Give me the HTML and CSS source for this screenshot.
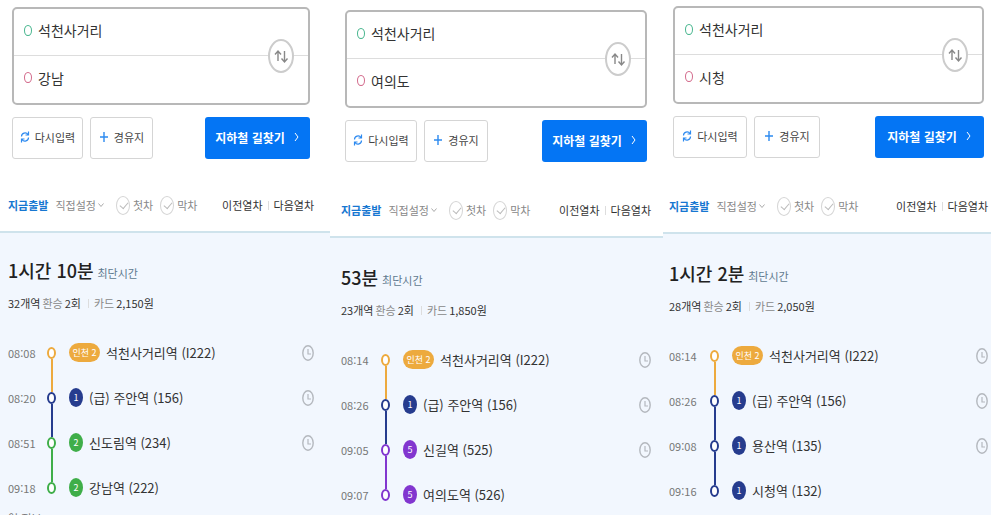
FILE: index.html
```
<!DOCTYPE html>
<html lang="ko">
<head>
    <meta charset="UTF-8">
    <meta name="viewport" content="width=device-width, initial-scale=1.0">
    <title>지하철 길찾기</title>
    <link rel="stylesheet" href="styles.css">
</head>
<body>
    <!-- shared icons -->
    <svg class="icons" aria-hidden="true">
        <symbol id="swap" viewBox="0 0 16 16"><path stroke-width="1.4" d="M5 13V3M2 6.500L5 3l3 3.500M11.500 3v11M8.500 10.500l3 3.500 3-3.500"/></symbol>
        <symbol id="reset" viewBox="0 0 10 14"><path stroke-width="1.2" d="M1.500 6.500C1.500 3 6 1.500 8 4.500M8.500 1.500v3.500H5.500M8.500 7.500C8.500 11 4 12.500 2 9.500M1.500 12.500V9H4.500"/></symbol>
        <symbol id="plus" viewBox="0 0 10 14"><path stroke-width="1.4" d="M5 2v10M1 7h8"/></symbol>
        <symbol id="next" viewBox="0 0 6 10"><path d="M1 1l3 4-3 4"/></symbol>
        <symbol id="down" viewBox="0 0 6 6"><path d="M0.500 1.500l2.500 3 2.500-3"/></symbol>
        <symbol id="clock" viewBox="0 0 12 16"><ellipse cx="6" cy="8" rx="5.200" ry="7.200" stroke-width="1.4"/><path stroke-width="1.2" d="M6 4v5h3"/></symbol>
    </svg>

    <main class="container">
        <section class="panel first">
            <form class="search">
                <div class="places">
                    <div class="place start"><label for="start1"></label><input type="text" id="start1" aria-label="출발" value="석천사거리"></div>
                    <div class="place end"><label for="end1"></label><input type="text" id="end1" aria-label="도착" value="강남"></div>
                    <button type="button" class="swap" aria-label="출발 도착 바꾸기"><svg><use href="#swap"/></svg></button>
                </div>
                <div class="buttons">
                    <button type="reset" class="small"><svg><use href="#reset"/></svg>다시입력</button>
                    <button type="button" class="small via"><svg><use href="#plus"/></svg>경유지</button>
                    <button type="button" class="find">지하철 길찾기<svg><use href="#next"/></svg></button>
                </div>
            </form>
            <div class="options">
                <a href="#" class="now">지금출발</a>
                <a href="#" class="custom">직접설정<svg><use href="#down"/></svg></a>
                <label class="check"><input type="checkbox">첫차</label>
                <label class="check"><input type="checkbox">막차</label>
                <div class="trains"><a href="#">이전열차</a><a href="#">다음열차</a></div>
            </div>
            <div class="result">
                <h2>1시간 10분<small>최단시간</small></h2>
                <p class="info"><b>32개역</b><span>환승</span><b>2회</b><span class="card">카드</span><b>2,150원</b></p>
                <ol class="route">
                    <li class="incheon"><time>08:08</time><i class="dot"></i><span class="line">인천 2</span><span class="name">석천사거리역 (I222)</span><svg class="clock"><use href="#clock"/></svg></li>
                    <li class="line1"><time>08:20</time><i class="dot"></i><span class="line">1</span><span class="name">(급) 주안역 (156)</span><svg class="clock"><use href="#clock"/></svg></li>
                    <li class="line2"><time>08:51</time><i class="dot"></i><span class="line">2</span><span class="name">신도림역 (234)</span><svg class="clock"><use href="#clock"/></svg></li>
                    <li class="line2"><time>09:18</time><i class="dot"></i><span class="line">2</span><span class="name">강남역 (222)</span></li>
                </ol>
                <p class="more">역 정보</p>
            </div>
        </section>

        <section class="panel second">
            <form class="search">
                <div class="places">
                    <div class="place start"><label for="start2"></label><input type="text" id="start2" aria-label="출발" value="석천사거리"></div>
                    <div class="place end"><label for="end2"></label><input type="text" id="end2" aria-label="도착" value="여의도"></div>
                    <button type="button" class="swap" aria-label="출발 도착 바꾸기"><svg><use href="#swap"/></svg></button>
                </div>
                <div class="buttons">
                    <button type="reset" class="small"><svg><use href="#reset"/></svg>다시입력</button>
                    <button type="button" class="small via"><svg><use href="#plus"/></svg>경유지</button>
                    <button type="button" class="find">지하철 길찾기<svg><use href="#next"/></svg></button>
                </div>
            </form>
            <div class="options">
                <a href="#" class="now">지금출발</a>
                <a href="#" class="custom">직접설정<svg><use href="#down"/></svg></a>
                <label class="check"><input type="checkbox">첫차</label>
                <label class="check"><input type="checkbox">막차</label>
                <div class="trains"><a href="#">이전열차</a><a href="#">다음열차</a></div>
            </div>
            <div class="result">
                <h2>53분<small>최단시간</small></h2>
                <p class="info"><b>23개역</b><span>환승</span><b>2회</b><span class="card">카드</span><b>1,850원</b></p>
                <ol class="route">
                    <li class="incheon"><time>08:14</time><i class="dot"></i><span class="line">인천 2</span><span class="name">석천사거리역 (I222)</span><svg class="clock"><use href="#clock"/></svg></li>
                    <li class="line1"><time>08:26</time><i class="dot"></i><span class="line">1</span><span class="name">(급) 주안역 (156)</span><svg class="clock"><use href="#clock"/></svg></li>
                    <li class="line5"><time>09:05</time><i class="dot"></i><span class="line">5</span><span class="name">신길역 (525)</span><svg class="clock"><use href="#clock"/></svg></li>
                    <li class="line5"><time>09:07</time><i class="dot"></i><span class="line">5</span><span class="name">여의도역 (526)</span></li>
                </ol>
            </div>
        </section>

        <section class="panel third">
            <form class="search">
                <div class="places">
                    <div class="place start"><label for="start3"></label><input type="text" id="start3" aria-label="출발" value="석천사거리"></div>
                    <div class="place end"><label for="end3"></label><input type="text" id="end3" aria-label="도착" value="시청"></div>
                    <button type="button" class="swap" aria-label="출발 도착 바꾸기"><svg><use href="#swap"/></svg></button>
                </div>
                <div class="buttons">
                    <button type="reset" class="small"><svg><use href="#reset"/></svg>다시입력</button>
                    <button type="button" class="small via"><svg><use href="#plus"/></svg>경유지</button>
                    <button type="button" class="find">지하철 길찾기<svg><use href="#next"/></svg></button>
                </div>
            </form>
            <div class="options">
                <a href="#" class="now">지금출발</a>
                <a href="#" class="custom">직접설정<svg><use href="#down"/></svg></a>
                <label class="check"><input type="checkbox">첫차</label>
                <label class="check"><input type="checkbox">막차</label>
                <div class="trains"><a href="#">이전열차</a><a href="#">다음열차</a></div>
            </div>
            <div class="result">
                <h2>1시간 2분<small>최단시간</small></h2>
                <p class="info"><b>28개역</b><span>환승</span><b>2회</b><span class="card">카드</span><b>2,050원</b></p>
                <ol class="route">
                    <li class="incheon"><time>08:14</time><i class="dot"></i><span class="line">인천 2</span><span class="name">석천사거리역 (I222)</span><svg class="clock"><use href="#clock"/></svg></li>
                    <li class="line1"><time>08:26</time><i class="dot"></i><span class="line">1</span><span class="name">(급) 주안역 (156)</span><svg class="clock"><use href="#clock"/></svg></li>
                    <li class="line1"><time>09:08</time><i class="dot"></i><span class="line">1</span><span class="name">용산역 (135)</span><svg class="clock"><use href="#clock"/></svg></li>
                    <li class="line1"><time>09:16</time><i class="dot"></i><span class="line">1</span><span class="name">시청역 (132)</span></li>
                </ol>
            </div>
        </section>
    </main>
</body>
</html>
```
FILE: styles.css
```
* {
    box-sizing: border-box;
}

body {
    margin: 0;
    height: 100vh;
    overflow: hidden;
    background-color: #fff;
    font-family: "Noto Sans CJK KR", sans-serif;
    font-size: 12px;
    color: #444;
}

a {
    color: inherit;
    text-decoration: none;
}

button,
input {
    font-family: inherit;
}

svg {
    fill: none;
    stroke: currentColor;
    flex: none;
}

.icons {
    display: none;
}

.container {
    display: grid;
    grid-template-columns: 330fr 333fr 328fr;
    height: 100vh;
}

.panel {
    display: flex;
    flex-direction: column;
    min-width: 0;
}

.first {
    --side: 8px;
    --end: 16px;
    --time: 39px;
    --small: 71px;
    --find: 105px;
    --options-top: 20px;
    --result-top: 22px;
    padding-top: 7px;
}

.second {
    --side: 11px;
    --end: 12px;
    --time: 40px;
    --small: 72px;
    --find: 105px;
    --options-top: 22px;
    --result-top: 24px;
    padding-top: 10px;
}

.third {
    --side: 6px;
    --end: 3px;
    --time: 41px;
    --small: 74px;
    --find: 109px;
    --options-top: 22px;
    --result-top: 24px;
    padding-top: 6px;
}

/* search form */
.search {
    margin-left: calc(var(--side) + 4px);
    margin-right: calc(var(--end) + 4px);
}

.places {
    position: relative;
    border: 2px solid #b8b8b8;
    border-radius: 5px;
}

.place {
    display: flex;
    align-items: center;
    gap: 6px;
    height: 47px;
    padding-left: 10px;
    padding-bottom: 4px;
}

.start {
    border-bottom: 1px solid #ddd;
}

.place label {
    width: 8px;
    height: 11px;
    border: 1px solid #46b58d;
    border-radius: 50%;
}

.end label {
    border-color: #d2688a;
}

.place input {
    flex: 1;
    min-width: 0;
    padding: 0;
    border: none;
    outline: none;
    background: none;
    font-size: 14px;
    color: #333;
}

.swap {
    position: absolute;
    right: 14px;
    top: 50%;
    width: 26px;
    height: 34px;
    margin-top: -17px;
    padding: 0;
    border: 2px solid #ccc;
    border-radius: 50%;
    background-color: #fff;
    color: #888;
}

.swap svg {
    display: block;
    width: 16px;
    height: 16px;
    margin: auto;
}

.buttons {
    display: flex;
    gap: 7px;
    margin-top: 12px;
}

.buttons button {
    display: flex;
    align-items: center;
    justify-content: center;
    height: 42px;
    padding: 0 0 2px;
    border-radius: 3px;
    white-space: nowrap;
}

.buttons .small {
    width: var(--small);
    gap: 5px;
    border: 1px solid #d5d5d5;
    background-color: #fff;
    font-size: 11px;
    color: #444;
}

.buttons .via {
    width: calc(var(--small) - 8px);
}

.small svg {
    width: 10px;
    height: 14px;
    color: #2d8af0;
}

.buttons .find {
    width: var(--find);
    margin-left: auto;
    gap: 9px;
    border: none;
    background-color: #0475f4;
    font-size: 12px;
    font-weight: bold;
    color: #fff;
}

.find svg {
    width: 6px;
    height: 10px;
}

/* departure options */
.options {
    display: flex;
    align-items: center;
    height: 52px;
    margin-top: var(--options-top);
    padding-left: var(--side);
    padding-right: var(--end);
    font-size: 11px;
    white-space: nowrap;
    color: #888;
}

.now {
    font-weight: bold;
    color: #1777d1;
}

.custom {
    margin-left: 7px;
}

.custom svg {
    width: 6px;
    height: 6px;
    margin: 0 0 2px 2px;
    color: #aaa;
}

.check {
    display: flex;
    align-items: center;
    gap: 3px;
    margin-left: 7px;
}

.custom + .check {
    margin-left: 12px;
}

.check input {
    appearance: none;
    position: relative;
    width: 14px;
    height: 19px;
    margin: 0;
    border: 1px solid #d5d5d5;
    border-radius: 50%;
}

.check input::after {
    content: "";
    position: absolute;
    left: 3px;
    top: 5px;
    width: 7px;
    height: 4px;
    border-left: 1px solid #bbb;
    border-bottom: 1px solid #bbb;
    transform: rotate(-50deg);
}

.trains {
    display: flex;
    margin-left: auto;
    color: #333;
}

.trains a + a::before {
    content: "";
    display: inline-block;
    height: 9px;
    margin: 0 5px;
    border-left: 1px solid #ddd;
}

/* search result */
.result {
    flex: 1;
    padding: var(--result-top) var(--end) 0 var(--side);
    border-top: 2px solid #cfe3ec;
    background-color: #f2f7fe;
}

h2 {
    margin: 0;
    font-size: 18px;
    font-weight: 500;
    line-height: 30px;
    color: #222;
}

h2 small {
    margin-left: 4px;
    font-size: 11px;
    font-weight: normal;
    color: #5f7a8f;
}

.info {
    display: flex;
    gap: 2px;
    margin: 5px 0 0;
    line-height: 20px;
    font-size: 11px;
    color: #888;
}

.info b {
    font-weight: normal;
    color: #333;
}

.card::before {
    content: "";
    display: inline-block;
    height: 9px;
    margin: 0 5px;
    border-left: 1px solid #ddd;
}

.route {
    margin: 17px 0 0;
    padding: 0;
    list-style: none;
}

.route li {
    --color: #263c8e;
    position: relative;
    display: flex;
    align-items: center;
    height: 45px;
}

.route .incheon {
    --color: #edaa3e;
}

.route .line2 {
    --color: #3fae49;
}

.route .line5 {
    --color: #8236cf;
}

.route time {
    width: var(--time);
    font-size: 11px;
    color: #777;
}

.dot {
    position: relative;
    width: 9px;
    height: 12px;
    border: 2px solid var(--color);
    border-radius: 50%;
    background-color: #fff;
}

/* line down to the next station */
.route li:not(:last-child) .dot::after {
    content: "";
    position: absolute;
    left: 2px;
    top: 10px;
    width: 2px;
    height: 33px;
    background-color: var(--color);
}

.line {
    min-width: 14px;
    height: 19px;
    margin: 0 6px 0 13px;
    border-radius: 50%;
    background-color: var(--color);
    font-size: 9px;
    line-height: 19px;
    text-align: center;
    color: #fff;
}

.incheon .line {
    width: 31px;
    border-radius: 10px;
}

.name {
    font-size: 13px;
    white-space: nowrap;
    color: #333;
}

.clock {
    width: 12px;
    height: 16px;
    margin-left: auto;
    color: #b4b8be;
}

.more {
    margin: 0;
    font-size: 11px;
    line-height: 16px;
    color: #777;
}
```
